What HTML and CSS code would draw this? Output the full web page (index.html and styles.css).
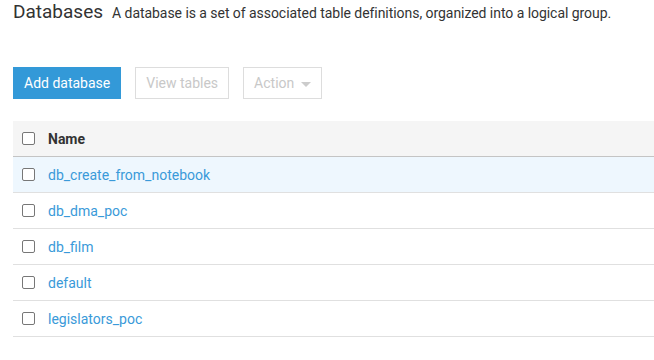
FILE: index.html
```html
<!DOCTYPE html>
<html lang="en">
<head>
    <meta charset="UTF-8">
    <title>Databases</title>
    <link rel="stylesheet" href="styles.css">
</head>
<body>
    <!-- header -->
    <div class="page-title">
        <h1>Databases</h1>
        <span class="subtitle">A database is a set of associated table definitions, organized into a logical group.</span>
    </div>

    <!-- toolbar -->
    <div class="toolbar">
        <button class="btn btn-primary">Add database</button>
        <button class="btn btn-disabled">View tables</button>
        <button class="btn btn-disabled">Action <span class="caret"></span></button>
    </div>

    <!-- database list -->
    <table class="db-table">
        <thead>
            <tr>
                <th class="col-check"><span class="check"></span></th>
                <th>Name</th>
            </tr>
        </thead>
        <tbody>
            <tr class="hover">
                <td class="col-check"><span class="check"></span></td>
                <td><a href="#">db_create_from_notebook</a></td>
            </tr>
            <tr>
                <td class="col-check"><span class="check"></span></td>
                <td><a href="#">db_dma_poc</a></td>
            </tr>
            <tr>
                <td class="col-check"><span class="check"></span></td>
                <td><a href="#">db_film</a></td>
            </tr>
            <tr>
                <td class="col-check"><span class="check"></span></td>
                <td><a href="#">default</a></td>
            </tr>
            <tr>
                <td class="col-check"><span class="check"></span></td>
                <td><a href="#">legislators_poc</a></td>
            </tr>
        </tbody>
    </table>
</body>
</html>
```

FILE: styles.css
```css
/* page */
body {
    margin: 0;
    padding: 0 0 0 13px;
    background-color: #fff;
    font-family: Roboto, "Liberation Sans", Arial, sans-serif;
    color: #333;
}

/* title */
.page-title {
    display: flex;
    align-items: baseline;
    gap: 9px;
    height: 30px;
}

.page-title h1 {
    margin: 0;
    font-size: 19px;
    font-weight: 400;
    line-height: 24px;
    color: #333;
}

.subtitle {
    font-size: 14px;
    letter-spacing: -0.05px;
    color: #333;
}

/* buttons */
.toolbar {
    display: flex;
    gap: 14px;
    margin-top: 37px;
}

.btn {
    height: 32px;
    padding: 0 10px;
    font-family: Roboto, "Liberation Sans", Arial, sans-serif;
    font-size: 14px;
    border: 1px solid #ddd;
    background: #fff;
    cursor: pointer;
}

.btn-primary {
    background-color: #3399d8;
    border-color: #3399d8;
    color: #fff;
}

.btn-disabled {
    color: #c8c8c8;
    cursor: default;
}

.caret {
    display: inline-block;
    width: 0;
    height: 0;
    margin-left: 3px;
    vertical-align: middle;
    border-left: 5px solid transparent;
    border-right: 5px solid transparent;
    border-top: 5px solid #ccc;
}

/* table */
.db-table {
    width: 100%;
    margin-top: 22px;
    border-collapse: collapse;
    font-size: 14px;
}

.db-table th {
    background-color: #f5f5f5;
    text-align: left;
    font-weight: bold;
    height: 35px;
    padding: 0;
    border-bottom: 1px solid #c4c4c4;
}

.db-table td {
    height: 35px;
    padding: 0;
    border-bottom: 1px solid #e0e0e0;
}

.db-table tr.hover td {
    background-color: #eef7fe;
}

.db-table .col-check {
    width: 26px;
    padding-left: 9px;
}

.check {
    display: block;
    width: 11px;
    height: 11px;
    border: 1px solid #777;
    border-radius: 2px;
    background: #fff;
}

.db-table a {
    color: #3a9ad9;
    text-decoration: none;
}
```
